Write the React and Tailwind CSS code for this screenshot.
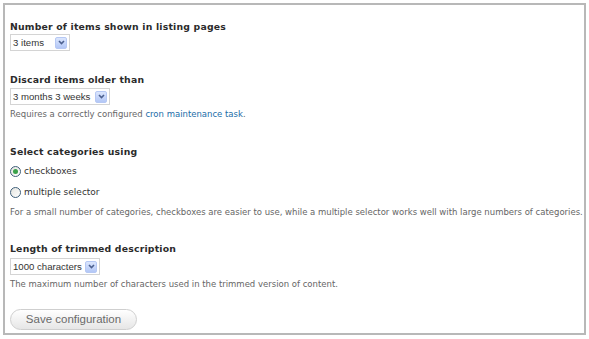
import React, { useState } from 'react';

const heading = "text-[9.3px] leading-[14px] font-bold text-[#2b2b2b] tracking-[0.2px] whitespace-nowrap";
const desc = "text-[8.5px] leading-[12px] text-[#666] whitespace-nowrap";

const SelectBox = ({ value, width }) => (
    <div
        className="flex items-center h-[17px] border border-[#d4d4d4] bg-white pl-[2px] pr-[2px] justify-between"
        style={{ width }}
    >
        <span className="text-[9.6px] leading-[15px] text-[#333] whitespace-nowrap font-['Liberation_Sans',Arial,sans-serif]">{value}</span>
        <span className="flex items-center justify-center w-[12px] h-[12px] rounded-[2px] border border-[#b6c8f4] bg-gradient-to-b from-[#dbe6fd] to-[#b3c7f6]">
            <svg width="7" height="5" viewBox="0 0 7 5">
                <path d="M1 1 L3.5 3.5 L6 1" fill="none" stroke="#4d6190" strokeWidth="1.6" />
            </svg>
        </span>
    </div>
);

const Radio = ({ checked, label, onClick }) => (
    <label className="flex items-center gap-[3px] h-[14px] cursor-pointer" onClick={onClick}>
        <span className="flex items-center justify-center w-[11px] h-[11px] rounded-full border border-[#3f5f7a] bg-gradient-to-br from-[#e4e4df] to-white">
            {checked && <span className="w-[5px] h-[5px] rounded-full bg-[#3aa14a]" />}
        </span>
        <span className="text-[9px] leading-[14px] text-[#333]">{label}</span>
    </label>
);

const App = () => {
    const [mode, setMode] = useState('checkboxes');

    return (
        <div className="w-[589px] h-[339px] bg-white p-[3px] font-['DejaVu_Sans',Verdana,sans-serif]">
            <div className="w-[583px] h-[332px] border-2 border-[#b8b8b8] pl-[5px] pt-[15px] flex flex-col items-start">
                <h2 className={heading}>Number of items shown in listing pages</h2>
                <SelectBox value="3 items" width={60} />

                <h2 className={`${heading} mt-[22px]`}>Discard items older than</h2>
                <div className="mt-[1px]">
                    <SelectBox value="3 months 3 weeks" width={100} />
                </div>
                <p className={`${desc} mt-[3px]`}>
                    Requires a correctly configured <a href="#" className="text-[#1b6ea8]">cron maintenance task</a>.
                </p>

                <h2 className={`${heading} mt-[25px]`}>Select categories using</h2>
                <div className="mt-[5px]">
                    <Radio checked={mode === 'checkboxes'} label="checkboxes" onClick={() => setMode('checkboxes')} />
                </div>
                <div className="mt-[7px]">
                    <Radio checked={mode === 'multiple'} label="multiple selector" onClick={() => setMode('multiple')} />
                </div>
                <p className={`${desc} mt-[7px]`}>
                    For a small number of categories, checkboxes are easier to use, while a multiple selector works well with large numbers of categories.
                </p>

                <h2 className={`${heading} mt-[24px]`}>Length of trimmed description</h2>
                <div className="mt-[2px]">
                    <SelectBox value="1000 characters" width={90} />
                </div>
                <p className={`${desc} mt-[3px]`}>
                    The maximum number of characters used in the trimmed version of content.
                </p>

                <button className="mt-[19px] w-[127px] h-[21px] rounded-full border border-[#cfcfcf] bg-gradient-to-b from-white to-[#e6e6e6] text-[11.5px] text-[#6a6a6a] font-['Liberation_Sans',Arial,sans-serif]">
                    Save configuration
                </button>
            </div>
        </div>
    );
};

export default App;
